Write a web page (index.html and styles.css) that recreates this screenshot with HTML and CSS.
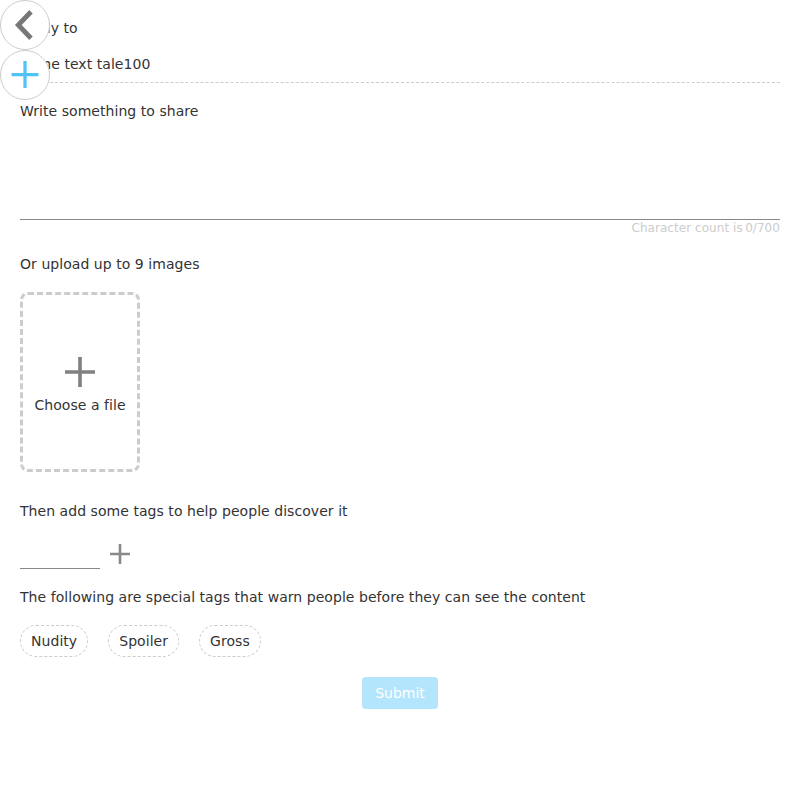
FILE: index.html
```html
<!DOCTYPE html>
<html>
<head>
<meta charset="utf-8">
<link rel="stylesheet" href="styles.css">
</head>
<body>
<div class="fab-stack">
  <button class="fab" aria-label="Back">
    <svg width="50" height="50" viewBox="0 0 50 50"><path d="M29.5 13 L18 25 L29.5 37" fill="none" stroke="#777" stroke-width="5" stroke-linecap="square"/></svg>
  </button>
  <button class="fab" aria-label="New">
    <svg width="50" height="50" viewBox="0 0 50 50"><path d="M11 24.5 H39 M25 10.5 V38.5" fill="none" stroke="#4fc3f7" stroke-width="3.4"/></svg>
  </button>
</div>
<main class="page">
  <div class="reply">Reply to</div>
  <div class="quoted">Some text tale100</div>
  <label class="label first">Write something to share</label>
  <div class="textarea"></div>
  <div class="count">Character count is&thinsp;0/700</div>
  <label class="label">Or upload up to 9 images</label>
  <div class="upload">
    <svg width="34" height="34" viewBox="0 0 34 34"><path d="M2 17 H32 M17 2 V32" stroke="#808080" stroke-width="3.6"/></svg>
    <span>Choose a file</span>
  </div>
  <label class="label tags-label">Then add some tags to help people discover it</label>
  <div class="tag-input-row">
    <div class="tag-input"></div>
    <svg class="tag-add" width="22" height="22" viewBox="0 0 22 22"><path d="M1 11 H21 M11 1 V21" stroke="#888" stroke-width="2.6"/></svg>
  </div>
  <label class="label special">The following are special tags that warn people before they can see the content</label>
  <div class="tags">
    <span class="tag">Nudity</span>
    <span class="tag">Spoiler</span>
    <span class="tag">Gross</span>
  </div>
  <div class="submit-row"><button class="submit">Submit</button></div>
</main>
</body>
</html>
```

FILE: styles.css
```css
* { box-sizing: border-box; }
body {
  margin: 0;
  background: #fff;
  font-family: "DejaVu Sans", sans-serif;
  font-size: 14px;
  letter-spacing: 0.05px;
  color: #333;
}
.fab-stack {
  position: fixed;
  top: 0;
  left: 0;
  display: flex;
  flex-direction: column;
}
.fab {
  width: 50px;
  height: 50px;
  padding: 0;
  border: 1px solid #ccc;
  border-radius: 50%;
  background: #fff;
  display: flex;
  align-items: center;
  justify-content: center;
}
.fab svg { display: block; }
.page {
  padding: 18px 20px 0;
  display: flex;
  flex-direction: column;
}
.reply { line-height: 20px; }
.quoted {
  line-height: 20px;
  margin-top: 16px;
  padding-bottom: 8px;
  border-bottom: 1px dashed #ccc;
}
.label {
  display: block;
  line-height: 20px;
  margin-top: 18px;
}
.textarea {
  height: 99px;
  border-bottom: 1px solid #888;
}
.count {
  text-align: right;
  font-size: 12px;
  line-height: 16px;
  color: #ccc;
}
.upload {
  margin-top: 18px;
  width: 120px;
  height: 180px;
  border: 3px dashed #ccc;
  border-radius: 8px;
  display: flex;
  flex-direction: column;
  align-items: center;
  justify-content: center;
}
.upload svg { display: block; margin-top: 6px; }
.upload span { line-height: 20px; margin-top: 6px; }
.tags-label { margin-top: 29px; }
.tag-input-row {
  margin-top: 22px;
  display: flex;
  align-items: center;
  gap: 9px;
  height: 26px;
}
.tag-input {
  width: 80px;
  height: 26px;
  border-bottom: 1px solid #888;
}
.tag-add { display: block; margin-top: -4px; }
.special { margin-top: 18px; }
.tags {
  margin-top: 18px;
  display: flex;
  gap: 20px;
}
.tag {
  height: 32px;
  line-height: 30px;
  padding: 0 10px;
  border: 1px dashed #ccc;
  border-radius: 16px;
}
.submit-row {
  margin-top: 20px;
  display: flex;
  justify-content: center;
}
.submit {
  width: 76px;
  height: 32px;
  border: none;
  border-radius: 4px;
  background: #b3e5fc;
  color: #fff;
  font-family: "DejaVu Sans", sans-serif;
  font-size: 14px;
}
```
